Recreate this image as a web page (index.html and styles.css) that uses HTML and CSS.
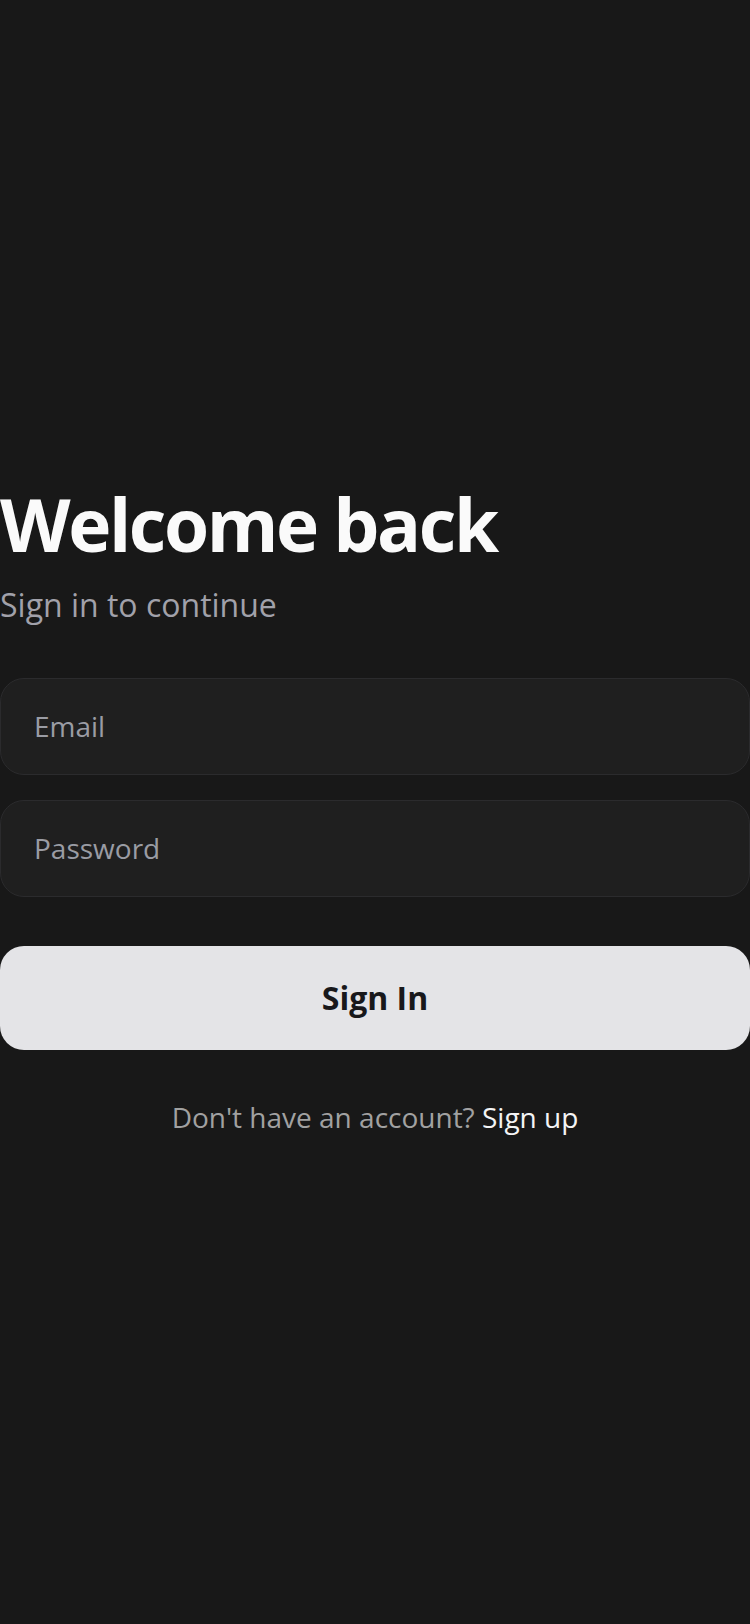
FILE: index.html
```html
<!DOCTYPE html>
<html lang="en">
<head>
<meta charset="utf-8">
<meta name="viewport" content="width=750">
<title>Sign in</title>
<link rel="stylesheet" href="styles.css">
</head>
<body>
<main class="screen">
  <section class="auth">
    <h1 class="auth-title">Welcome back</h1>
    <p class="auth-subtitle">Sign in to continue</p>
    <form class="auth-form">
      <input class="field" type="email" placeholder="Email">
      <input class="field" type="password" placeholder="Password">
      <button class="btn-primary" type="button">Sign In</button>
    </form>
    <p class="auth-footer">Don't have an account? <a class="auth-link" href="#">Sign up</a></p>
  </section>
</main>
</body>
</html>
```

FILE: styles.css
```css
* { box-sizing: border-box; }

html, body {
  margin: 0;
  padding: 0;
  background: #181818;
}

body {
  font-family: "Open Sans", "Noto Sans", sans-serif;
  color: #fafafa;
}

.screen {
  min-height: 1624px;
  padding-bottom: 10px;
  display: flex;
  flex-direction: column;
  justify-content: center;
}

.auth {
  width: 750px;
  display: flex;
  flex-direction: column;
}

.auth-title {
  margin: 0;
  font-size: 73px;
  line-height: 90px;
  font-weight: 700;
  color: #fafafa;
  letter-spacing: -2.4px;
}

.auth-subtitle {
  margin: 14px 0 0;
  font-size: 32px;
  line-height: 44px;
  font-weight: 400;
  color: #a1a1aa;
}

.auth-form {
  margin-top: 51px;
  display: flex;
  flex-direction: column;
}

.field {
  width: 100%;
  height: 97px;
  padding: 0 33px;
  border: 1px solid #2b2b2d;
  border-radius: 24px;
  background: #1f1f1f;
  color: #fafafa;
  font-family: inherit;
  font-size: 28px;
  outline: none;
  -webkit-appearance: none;
  appearance: none;
}

.field + .field { margin-top: 25px; }

.field::placeholder { color: #9a9ca4; opacity: 1; }

.btn-primary {
  margin-top: 49px;
  width: 100%;
  height: 104px;
  border: 0;
  border-radius: 24px;
  background: #e4e4e7;
  color: #18181b;
  font-family: inherit;
  font-size: 32px;
  font-weight: 700;
  cursor: pointer;
}

.auth-footer {
  margin: 48px 0 0;
  text-align: center;
  font-size: 28px;
  line-height: 38px;
  color: #a1a1a1;
}

.auth-link {
  color: #f4f4f5;
  text-decoration: none;
}
```
